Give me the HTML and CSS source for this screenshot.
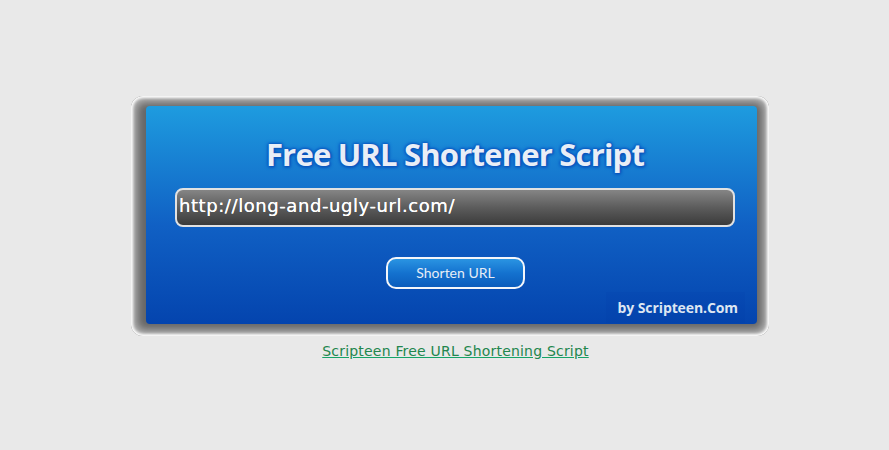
FILE: index.html
```html
<!DOCTYPE html>
<html>
<head>
<meta charset="utf-8">
<link rel="stylesheet" href="styles.css">
</head>
<body>
<div class="page">
  <div class="frame">
    <div class="panel">
      <h1 class="title">Free URL Shortener Script</h1>
      <div class="field">http://long-and-ugly-url.com/</div>
      <div class="btn-row"><span class="btn">Shorten URL</span></div>
      <div class="credit"><span class="credit-box">by Scripteen.Com</span></div>
    </div>
  </div>
  <a class="link" href="#">Scripteen Free URL Shortening Script</a>
</div>
</body>
</html>
```
FILE: styles.css
```css
html, body {
  margin: 0;
  padding: 0;
  background: #e9e9e9;
}
.page {
  display: flex;
  flex-direction: column;
  align-items: center;
  padding-top: 96px;
  font-family: "DejaVu Sans", Verdana, sans-serif;
}
.frame {
  box-sizing: border-box;
  width: 638px;
  margin-left: 11px;
  padding: 10px 12px 12px 15px;
  border-radius: 12px;
  background: #666;
  box-shadow: inset 0 0 3px 2px #fff, inset 0 0 9px 6px #b8b8b8;
}
.panel {
  box-sizing: border-box;
  height: 218px;
  border-radius: 4px;
  background: linear-gradient(to bottom, #1e9cdf 0%, #1060c4 55%, #0444ae 100%);
  display: flex;
  flex-direction: column;
  padding: 0 22px 0 29px;
}
.title {
  margin: 28px 0 0 0;
  text-align: center;
  font-family: "Open Sans", sans-serif;
  font-weight: 700;
  font-size: 31px;
  line-height: 40px;
  letter-spacing: -0.8px;
  color: #e9eef6;
  text-shadow: 0 0 2px #0a55c0, 0 0 3px #0a55c0, 0 0 4px #0a55c0, 1px 1px 3px #0a4fb5;
}
.field {
  box-sizing: border-box;
  height: 39px;
  margin-top: 14px;
  border: 2px solid #e2e2e2;
  border-radius: 8px;
  background: linear-gradient(to bottom, #858585 0%, #5c5c5c 50%, #3b3b3b 100%);
  color: #fff;
  font-size: 18px;
  line-height: 32px;
  padding-left: 2px;
  letter-spacing: 0.57px;
  text-shadow: 0 0 0.5px #fff;
}
.btn-row {
  display: flex;
  justify-content: center;
  margin-top: 30px;
}
.btn {
  box-sizing: border-box;
  width: 139px;
  height: 32px;
  border: 2px solid #f4f6fa;
  border-radius: 10px;
  background: linear-gradient(to bottom, #2a94e2 0%, #1472cf 50%, #0b5cbc 100%);
  color: #e6edf6;
  font-family: Lato, sans-serif;
  font-size: 14px;
  line-height: 28px;
  text-align: center;
  margin-left: 1px;
}
.credit {
  display: flex;
  justify-content: flex-end;
  margin-top: 3px;
  margin-right: -10px;
}
.credit-box {
  padding: 6px 7px 6px 12px;
  background: rgba(0, 40, 150, 0.07);
  color: #dde6f2;
  font-family: "Open Sans", sans-serif;
  font-weight: 700;
  font-size: 14px;
  line-height: 19px;
  letter-spacing: -0.1px;
}
.link {
  margin-top: 6px;
  margin-left: 22px;
  color: #23864d;
  text-decoration: underline;
  text-decoration-color: #15a468;
  font-family: "DejaVu Sans", Verdana, sans-serif;
  font-size: 14px;
  line-height: 18px;
  letter-spacing: 0.2px;
}
```
